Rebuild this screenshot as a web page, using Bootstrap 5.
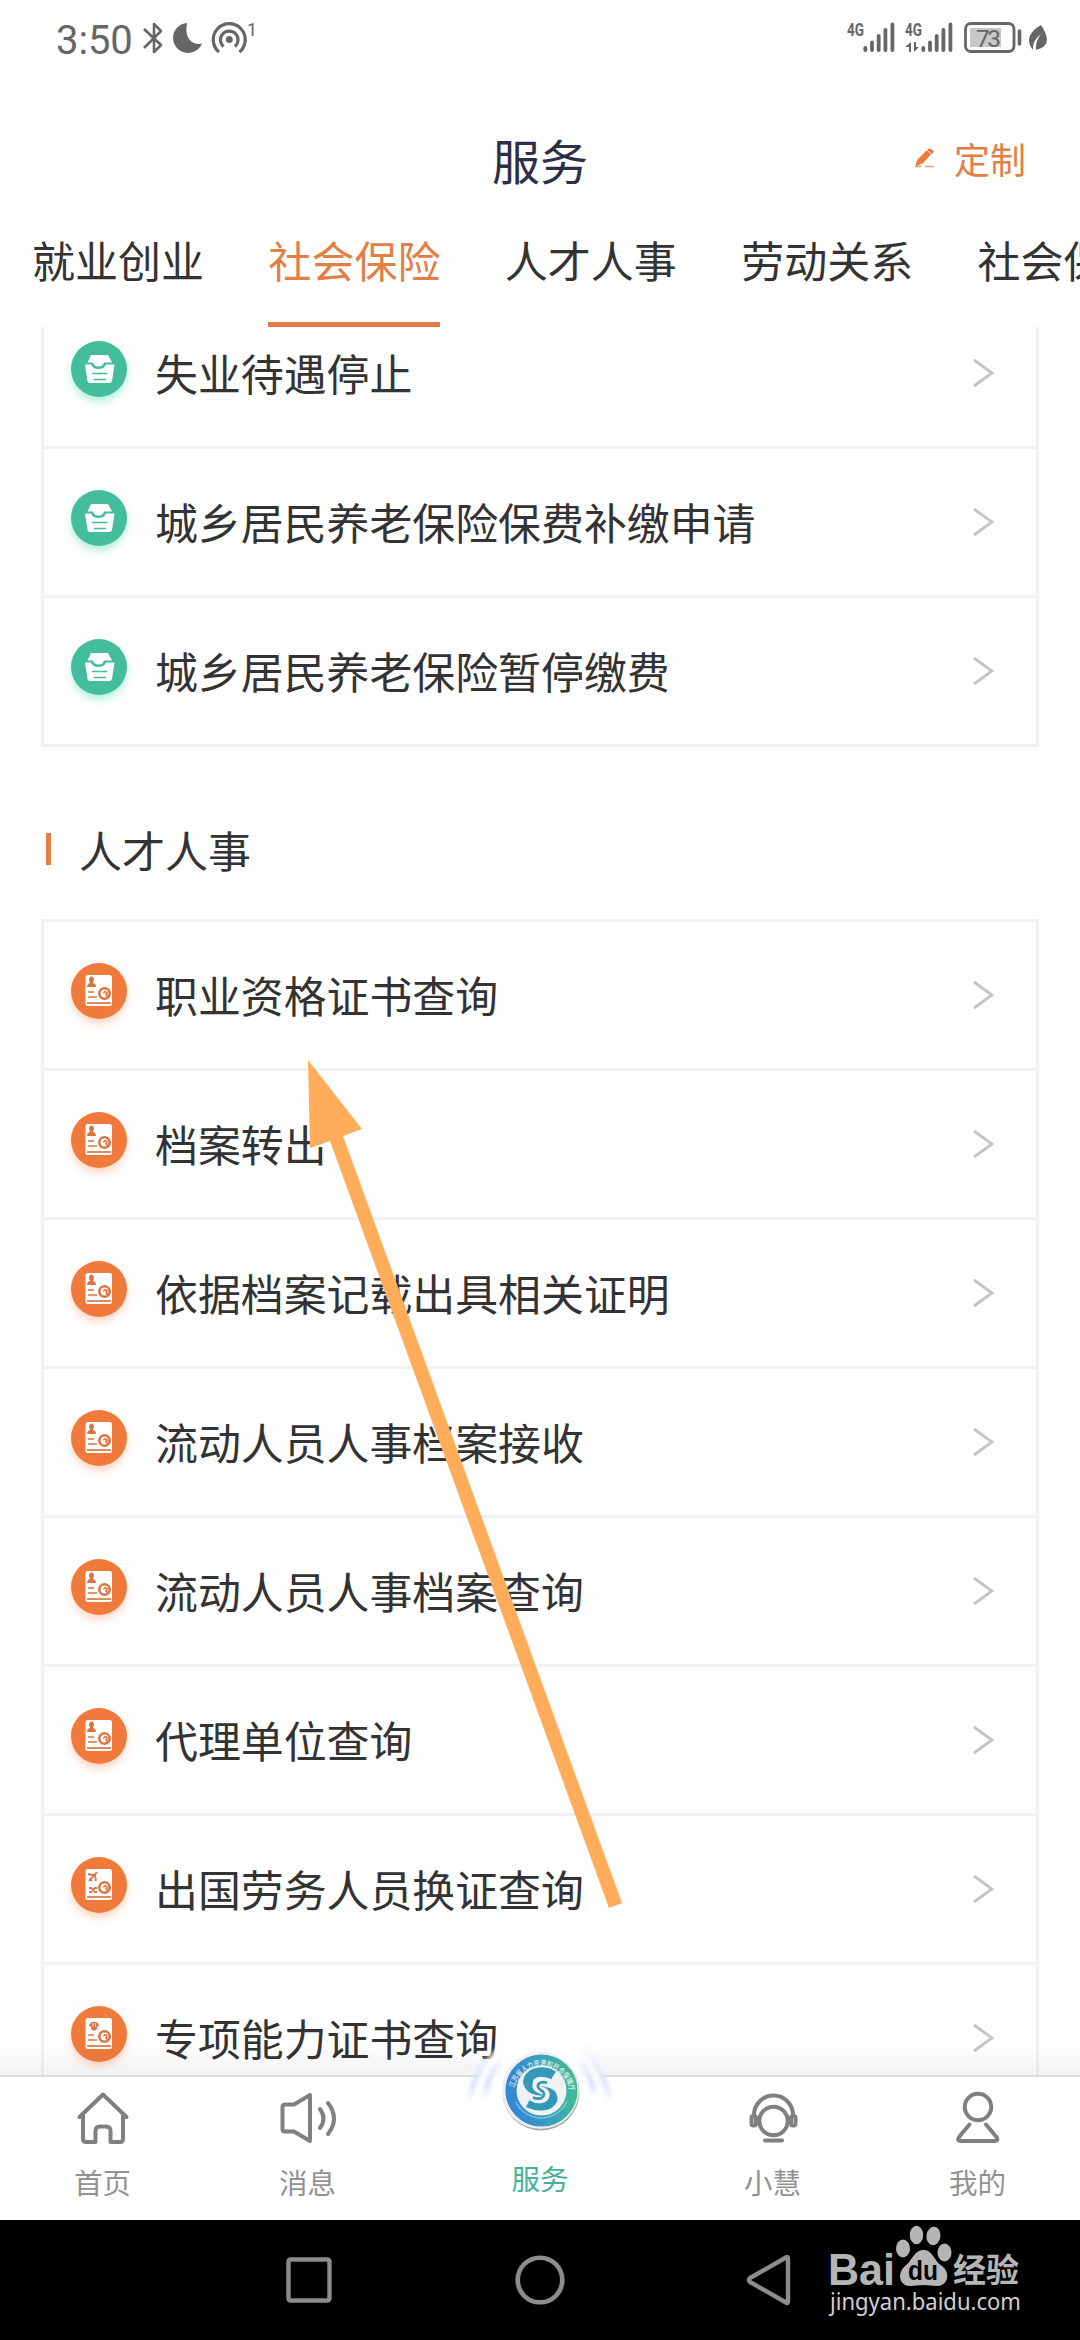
<!DOCTYPE html>
<html lang="zh-CN">
<head>
<meta charset="utf-8">
<meta name="viewport" content="width=device-width, initial-scale=1">
<title>服务</title>
<link href="https://cdn.jsdelivr.net/npm/bootstrap@5.3.0/dist/css/bootstrap.min.css" rel="stylesheet">
<style>
  body { width: 1080px; height: 2340px; background: #fefefe; color: #333; font-family: "Noto Sans CJK SC", sans-serif; line-height: 1; }
  svg { display: block; flex: none; }
  .phone { width: 1080px; height: 2340px; }
  .status-bar { height: 76px; padding: 0 30px 0 56px; flex: none; }
  .status-bar text, .clock { font-family: Roboto, sans-serif; }
  .clock { font-size: 40px; color: #666; width: 84px; padding-top: 5px; letter-spacing: -.1px; }
  .page-head { height: 154px; padding: 0 54px; flex: none; }
  .page-title { font-size: 48px; color: #2c3046; padding-top: 59px; }
  .accent { color: #e17f45; }
  .customize { font-size: 36px; gap: 18px; padding-top: 64px; }
  .side { width: 120px; }
  .tab-strip { height: 97px; padding-left: 32px; gap: 64.4px; flex: none; }
  .tab-strip .nav-link { padding: 0; height: 97px; font-size: 43px; line-height: 58px; color: #333; white-space: nowrap; flex: none; border-bottom: 5px solid transparent; }
  .tab-strip .nav-link.active { color: #e17f45; border-bottom-color: #e17f45; }
  .feed { height: 1750px; flex: none; }
  .svc { margin: 0 41px; border: solid #f1f1f1; border-width: 0 3px; border-radius: 0; }
  .svc.first { margin-top: -27px; }
  .svc.second { border-top-width: 3px; }
  .svc .list-group-item { height: 149px; padding: 0 42px 0 17px; border: 0; border-bottom: 3px solid #f1f1f1; border-radius: 0; background: transparent; color: #333; font-size: 42.9px; white-space: nowrap; }
  .svc .list-group-item > span { position: static; padding-bottom: 1px; margin-left: 18px; }
  .svc .dot { margin-top: -7px; }
  .section-head { height: 172px; padding: 35px 0 0 46px; font-size: 43px; gap: 28px; flex: none; }
  .section-head span { margin-top: -3px; }
  .tick { width: 5px; height: 32px; background: #e17f45; margin-top: -4px; }
  .fade-edge { left: 0; right: 0; bottom: 0; height: 36px; background: linear-gradient(rgba(0,0,0,0), rgba(0,0,0,.045)); border-bottom: 2px solid #dedede; }
  .tabbar { height: 143px; font-size: 28.5px; color: #929292; flex: none; padding: 0; background: #fff; }
  .tabbar .item { width: 205px; padding-top: 12px; }
  .tabbar .item span { margin-top: 19px; }
  .tabbar .mid { width: 260px; padding-top: 87px; color: #45b296; }
  .halo { left: 440px; top: 2030px; }
  .sysnav { height: 120px; background: #000; flex: none; }
  .pointer { left: 0; top: 0; pointer-events: none; }
  .brandmark { left: 821px; top: 2220px; }
</style>
<script src="https://cdn.jsdelivr.net/npm/bootstrap@5.3.0/dist/js/bootstrap.bundle.min.js"></script>
</head>
<body class="m-0 overflow-hidden">
<svg width="0" height="0" class="position-absolute">
  <defs>
    <filter id="blur" x="-30%" y="-30%" width="160%" height="160%"><feGaussianBlur stdDeviation="4"/></filter>
    <symbol id="box" viewBox="0 0 76 76">
      <circle cx="38" cy="42" r="27" fill="#6fe3bd" opacity=".6" filter="url(#blur)"/>
      <circle cx="38" cy="37" r="28" fill="#43bd9a"/>
      <path d="M30 23H47L51 30.5H43Q42 34.5 37.500 34.500 33 34.500 32 30.500H26.500Z" fill="#fff"/>
      <path d="M24 32.500H30Q32 37 37.500 37 43 37 45 32.500H53.500L51 49Q50.500 51 48.500 51H29Q27 51 26.500 49Z" fill="#fff"/>
      <path d="M31 41.500H46.500M33 47.500H45" stroke="#43bd9a" stroke-width="1.700"/>
    </symbol>
    <symbol id="sheet" viewBox="0 0 76 76">
      <circle cx="38" cy="42" r="27" fill="#f79a68" opacity=".45" filter="url(#blur)"/>
      <circle cx="38" cy="37" r="28" fill="#ef7a3b"/>
      <rect x="24.500" y="21" width="26.500" height="31" rx="2.500" fill="#fff"/>
      <path d="M26 49H50" stroke="#d97d4c" stroke-width="1.800"/>
      <circle cx="43.500" cy="39.500" r="5.200" fill="none" stroke="#d97545" stroke-width="2.600"/>
      <path d="M43 39.500a1.500 1.500 0 1 1 1.500 1.200M44.500 40L47.500 44" stroke="#d97545" stroke-width="1.600" fill="none"/>
    </symbol>
    <symbol id="person" viewBox="0 0 76 76">
      <use href="#sheet" width="76" height="76"/>
      <path d="M26 33Q26 29.500 29 29L28 26Q28 22.500 30.500 22.500T33 26L32 29Q35 29.500 35 33Z" fill="#d97545"/>
      <path d="M27 38H33M27 43H36" stroke="#d97545" stroke-width="1.600"/>
    </symbol>
    <symbol id="plane" viewBox="0 0 76 76">
      <use href="#sheet" width="76" height="76"/>
      <path d="M28 33L36 24M27 26L34 27.500 35 33M28.500 30.500L31 33M28 40H30L34 44H36M28 44H30L34 40H36" stroke="#d97545" stroke-width="1.800" fill="none"/>
    </symbol>
    <symbol id="skill" viewBox="0 0 76 76">
      <use href="#sheet" width="76" height="76"/>
      <path d="M28 29a4.700 4 0 0 1 10 0l-2 .5v2.500l-3 2-3-2v-2.500z" fill="#d97545"/><path d="M32 26V29.500M34.500 26V29.500" stroke="#fff" stroke-width=".8"/>
      <path d="M27 38H33M27 43H36" stroke="#d97545" stroke-width="1.600"/>
    </symbol>
    <symbol id="chev" viewBox="0 0 22 30"><path d="M2 2L20 15 2 28" fill="none" stroke="#c4c4c4" stroke-width="2.800"/></symbol>
  </defs>
</svg>

<div class="phone d-flex flex-column position-relative overflow-hidden">
  <header class="status-bar d-flex align-items-center justify-content-between">
    <div class="d-flex align-items-center">
      <span class="clock">3:50</span>
      <svg width="120" height="76" viewBox="140 0 120 76" fill="none" stroke="#666" stroke-width="2.600">
        <path d="M144 29L161 45 154 52V24L161 31 144 48" stroke-linejoin="round"/>
        <path d="M187 23A15 15 0 1 0 202 43.500C192 46 184 38 187 23Z" fill="#666" stroke="none"/>
        <path d="M219 52A16 16 0 1 1 239.500 52M223.500 46.500A8.800 8.800 0 1 1 235 46.500" stroke-width="3.200"/>
        <circle cx="229.300" cy="39.500" r="3.500" fill="#666" stroke="none"/>
        <text x="247" y="36" font-size="18" fill="#666" stroke="none">1</text>
      </svg>
    </div>
    <svg width="206" height="76" viewBox="844 0 206 76" fill="#666">
      <g font-size="17.500" font-weight="700"><text x="847" y="35.500" textLength="17" lengthAdjust="spacingAndGlyphs">4G</text><text x="905" y="35.500" textLength="17" lengthAdjust="spacingAndGlyphs">4G</text></g>
      <path id="bars" d="M865.300 48V50M872 42.500V50M878.700 36V50M885.400 30V50M892.400 24.500V50" stroke="#666" stroke-width="3.800" stroke-linecap="round"/>
      <use href="#bars" x="58"/>
      <path d="M911 52V42L905 47H909V52ZM914 42V52L919 47H916V42Z"/>
      <rect x="965.500" y="23.500" width="48.500" height="28" rx="5.500" fill="none" stroke="#666" stroke-width="2.800"/>
      <rect x="970" y="28" width="31" height="19" fill="#c8c8c8"/>
      <text x="976" y="46.500" font-size="24.500" textLength="25">73</text>
      <path d="M1019.500 31V44" stroke="#666" stroke-width="3.600" stroke-linecap="round"/>
      <path d="M1041 25Q1055 46 1036 50Q1035 42 1041 34Q1032 41 1033 50Q1022 36 1041 25Z"/>
    </svg>
  </header>

  <div class="page-head d-flex align-items-start justify-content-between">
    <div class="side"></div>
    <div class="page-title">服务</div>
    <div class="side customize accent d-flex align-items-center justify-content-end">
      <svg width="22" height="22" viewBox="0 0 22 22"><path d="M1 20L3 13 14 2Q16 0 20 4.500L9 16Z" fill="#ef7a3b"/><path d="M13 3L19 9" stroke="#fff"/><path d="M1 19.500H7M11 19.500H20" stroke="#eaa37e" stroke-width="1.500"/></svg>
      <span>定制</span>
    </div>
  </div>

  <nav class="tab-strip nav flex-nowrap overflow-hidden">
    <a class="nav-link">就业创业</a><a class="nav-link active">社会保险</a><a class="nav-link">人才人事</a><a class="nav-link">劳动关系</a><a class="nav-link">社会保障卡</a>
  </nav>

  <main class="feed overflow-hidden position-relative d-flex flex-column">
    <div class="list-group svc first flex-shrink-0">
      <div class="list-group-item d-flex align-items-center"><svg class="dot" width="76" height="76"><use href="#box"/></svg><span class="flex-fill">失业待遇停止</span><svg width="22" height="30"><use href="#chev"/></svg></div>
      <div class="list-group-item d-flex align-items-center"><svg class="dot" width="76" height="76"><use href="#box"/></svg><span class="flex-fill">城乡居民养老保险保费补缴申请</span><svg width="22" height="30"><use href="#chev"/></svg></div>
      <div class="list-group-item d-flex align-items-center"><svg class="dot" width="76" height="76"><use href="#box"/></svg><span class="flex-fill">城乡居民养老保险暂停缴费</span><svg width="22" height="30"><use href="#chev"/></svg></div>
    </div>
    <div class="section-head d-flex align-items-center"><i class="tick"></i><span>人才人事</span></div>
    <div class="list-group svc second flex-shrink-0">
      <div class="list-group-item d-flex align-items-center"><svg class="dot" width="76" height="76"><use href="#person"/></svg><span class="flex-fill">职业资格证书查询</span><svg width="22" height="30"><use href="#chev"/></svg></div>
      <div class="list-group-item d-flex align-items-center"><svg class="dot" width="76" height="76"><use href="#person"/></svg><span class="flex-fill">档案转出</span><svg width="22" height="30"><use href="#chev"/></svg></div>
      <div class="list-group-item d-flex align-items-center"><svg class="dot" width="76" height="76"><use href="#person"/></svg><span class="flex-fill">依据档案记载出具相关证明</span><svg width="22" height="30"><use href="#chev"/></svg></div>
      <div class="list-group-item d-flex align-items-center"><svg class="dot" width="76" height="76"><use href="#person"/></svg><span class="flex-fill">流动人员人事档案接收</span><svg width="22" height="30"><use href="#chev"/></svg></div>
      <div class="list-group-item d-flex align-items-center"><svg class="dot" width="76" height="76"><use href="#person"/></svg><span class="flex-fill">流动人员人事档案查询</span><svg width="22" height="30"><use href="#chev"/></svg></div>
      <div class="list-group-item d-flex align-items-center"><svg class="dot" width="76" height="76"><use href="#person"/></svg><span class="flex-fill">代理单位查询</span><svg width="22" height="30"><use href="#chev"/></svg></div>
      <div class="list-group-item d-flex align-items-center"><svg class="dot" width="76" height="76"><use href="#plane"/></svg><span class="flex-fill">出国劳务人员换证查询</span><svg width="22" height="30"><use href="#chev"/></svg></div>
      <div class="list-group-item d-flex align-items-center"><svg class="dot" width="76" height="76"><use href="#skill"/></svg><span class="flex-fill">专项能力证书查询</span><svg width="22" height="30"><use href="#chev"/></svg></div>
    </div>
    <div class="fade-edge position-absolute"></div>
  </main>

  <footer class="tabbar d-flex">
    <div class="item d-flex flex-column align-items-center">
      <svg width="60" height="60" viewBox="-30 0 60 60" fill="none" stroke="#808080" stroke-width="4" stroke-linecap="round" stroke-linejoin="round"><path d="M-23.500 28L0 5.500 23.500 28M-20 26V50Q-20 53 -17 53H-7.500V42Q-7.500 37.500 -3 37.500H3Q7.500 37.500 7.500 42V53H17Q20 53 20 50V26"/></svg>
      <span>首页</span>
    </div>
    <div class="item d-flex flex-column align-items-center">
      <svg width="60" height="60" viewBox="277 2089 60 60" fill="none" stroke="#808080" stroke-width="4" stroke-linecap="round" stroke-linejoin="round"><path d="M309 2095V2141L293 2131.500H284Q281.500 2131.500 281.500 2129V2107Q281.500 2104.500 284 2104.500H293ZM319 2109Q326 2118.500 319 2128M327 2103Q339 2118.500 327 2134"/></svg>
      <span>消息</span>
    </div>
    <div class="mid d-flex flex-column align-items-center"><span>服务</span></div>
    <div class="item d-flex flex-column align-items-center">
      <svg width="60" height="60" viewBox="742 2089 60 60" fill="none" stroke="#808080" stroke-width="4" stroke-linecap="round"><circle cx="772.500" cy="2121" r="14.200"/><path d="M753 2115A19.500 19.500 0 0 1 792 2115M764 2140.500H781"/><rect x="750.500" y="2116" width="4.500" height="9.500" rx="2"/><rect x="790" y="2116" width="4.500" height="9.500" rx="2"/></svg>
      <span>小慧</span>
    </div>
    <div class="item d-flex flex-column align-items-center">
      <svg width="60" height="60" viewBox="948 2089 60 60" fill="none" stroke="#808080" stroke-width="4" stroke-linecap="round" stroke-linejoin="round"><circle cx="978" cy="2107" r="13.200"/><path d="M969.500 2124.500L959 2137Q956.500 2141 961 2141H994.500Q999 2141 996.500 2137L986 2124.500"/></svg>
      <span>我的</span>
    </div>
  </footer>

  <div class="sysnav">
    <svg width="1080" height="120" viewBox="0 2220 1080 120" fill="none" stroke="#8c8c8c" stroke-width="4.400" stroke-linejoin="round"><rect x="288.500" y="2259.500" width="41" height="41" rx="2"/><circle cx="540" cy="2280" r="22.300" stroke-width="4.600"/><path d="M786 2257.500Q788 2256 788 2259V2301Q788 2304 786 2302.500L750 2282Q748 2280 750 2278Z"/></svg>
  </div>

  <svg class="halo position-absolute" width="200" height="140" viewBox="0 0 200 140">
    <defs>
      <linearGradient id="ring" x1="0" y1=".6" x2="1" y2=".4"><stop offset=".1" stop-color="#3589d2"/><stop offset=".55" stop-color="#38a1bd"/><stop offset="1" stop-color="#42b996"/></linearGradient>
      <linearGradient id="arc" x1="0" y1="0" x2="0" y2="1"><stop offset="0" stop-color="#dfe6fb" stop-opacity=".2"/><stop offset=".6" stop-color="#cfdaf8"/><stop offset="1" stop-color="#e8edfc" stop-opacity="0"/></linearGradient>
      <filter id="soft"><feGaussianBlur stdDeviation="2"/></filter>
    </defs>
    <path d="M32 75Q34 37 60 17Q100 -1 140 17Q166 37 171 75Z" fill="#fff" opacity=".9" filter="url(#soft)"/>
    <g fill="none" stroke="url(#arc)" stroke-width="5" filter="url(#soft)"><path d="M29 76Q33 40 56 20M45 66Q48 44 61 31M171 76Q165 40 143 20M154 62Q150 42 139 31"/></g>
    <circle cx="101" cy="62" r="38.500" fill="#aaa5a5"/>
    <circle cx="100.500" cy="60.500" r="38.500" fill="#edeef1"/>
    <circle cx="101.500" cy="60.500" r="30.500" fill="none" stroke="url(#ring)" stroke-width="11"/>
    <circle cx="101.500" cy="60.500" r="24.500" fill="#f0f1f3"/>
    <path id="curve" d="M73.500 64A28 28 0 1 1 129.500 64" fill="none"/>
    <text font-size="7.600" fill="#fff"><textPath href="#curve" startOffset="6" textLength="79" lengthAdjust="spacingAndGlyphs">江苏省人力资源和社会保障厅</textPath></text>
    <path d="M76 72A28 28 0 0 0 127 71" fill="none" stroke="#8ed2e5" stroke-width="1.500" stroke-dasharray="1.500 .6"/>
    <path d="M113.500 45.500C106 41 96 40.500 90 46.500C85 53 90 59 97 60.500C105 61.500 114 62 112.500 70C109 77.500 97 77 88 73" fill="none" stroke="#3498b8" stroke-width="9.500"/>
    <path d="M110 53C104 49.500 96 51 96 56C97 62 106 58.500 106 65C105 71 97 70.500 91 67" fill="none" stroke="#f0f1f3" stroke-width="7.500"/>
    <path d="M107 53C102 51 97 53 98 57C99 61 105 60 104 65C102 69.500 97 69 93 67.500" fill="none" stroke="#3498b8" stroke-width="2.600"/>
  </svg>

  <svg class="brandmark position-absolute" width="220" height="110" viewBox="820 2220 220 110" fill="#b5b5b5">
    <text x="827" y="2285" font-family="Liberation Sans, sans-serif" font-size="44" font-weight="700" textLength="67" lengthAdjust="spacingAndGlyphs">Bai</text>
    <ellipse cx="902" cy="2248.500" rx="7" ry="9"/><ellipse cx="915.500" cy="2235" rx="6.700" ry="9.300"/><ellipse cx="932.500" cy="2236" rx="7" ry="9.300" transform="rotate(8 932.500 2236)"/><ellipse cx="943.500" cy="2252.500" rx="7" ry="9"/>
    <path d="M922.500 2250C932 2250 933 2261 941 2266C950 2273 947 2286 936 2286C931 2286 928 2285 922.500 2285C917 2285 914 2286 909 2286C898 2286 896 2273 904 2266C911 2261 913 2250 922.500 2250Z"/>
    <text x="907" y="2280" font-family="Liberation Sans, sans-serif" font-size="27" font-weight="700" fill="#000" textLength="30" lengthAdjust="spacingAndGlyphs">du</text>
    <text x="952" y="2282" font-family="Noto Sans CJK SC, sans-serif" font-size="33" font-weight="700" textLength="66">经验</text>
    <text x="829" y="2310" font-family="Noto Sans, sans-serif" font-size="24" fill="#d0d0d0" textLength="191" lengthAdjust="spacingAndGlyphs">jingyan.baidu.com</text>
  </svg>

  <svg class="pointer position-absolute" width="1080" height="2340" viewBox="0 0 1080 2340"><path d="M308 1060L362 1129 343 1136 622 1903 609 1908 330 1141 310 1148Z" fill="#ffad5a"/></svg>
</div>
</body>
</html>
